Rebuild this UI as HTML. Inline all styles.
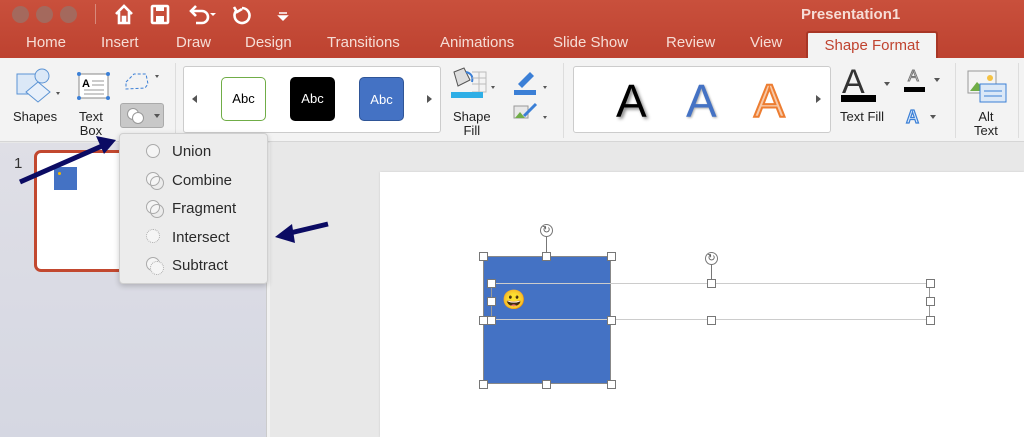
<!DOCTYPE html>
<html><head><style>
*{margin:0;padding:0;box-sizing:border-box}
body{width:1024px;height:437px;overflow:hidden;position:relative;font-family:"Liberation Sans",sans-serif;background:#e8e8e8}
.abs{position:absolute}
.title{left:0;top:0;width:1024px;height:58px;background:linear-gradient(#c9503c,#bd4230)}
.tab{position:absolute;top:34px;color:#f6ddd6;font-size:15px}
.rib{left:0;top:58px;width:1024px;height:84px;background:#f3f3f3;border-bottom:1px solid #d6d6d6}
.lbl{position:absolute;font-size:13px;color:#222;text-align:center;line-height:14px}
.dot{position:absolute;width:17px;height:17px;border-radius:50%;background:#a4695d;top:6px}
.mi{position:absolute;left:52px;font-size:15px;color:#2a2a2a}
.mic{position:absolute;left:26px;width:14px;height:14px;border:1px solid #aaa;border-radius:50%;background:#f5f5f5}
.h{position:absolute;width:9px;height:9px;background:#fff;border:1px solid #777;margin:-4px 0 0 -4px}
.rot{position:absolute;width:13px;height:13px;border:1px solid #777;border-radius:50%;background:#fff;margin:-6px 0 0 -6px;font-size:10px;line-height:11px;text-align:center;color:#555}
</style></head><body>
<div class="abs title">
 <div class="dot" style="left:12px"></div><div class="dot" style="left:36px"></div><div class="dot" style="left:60px"></div>
 <div class="abs" style="left:95px;top:4px;width:1px;height:20px;background:#d78a7c"></div>
 <svg class="abs" style="left:112px;top:2px" width="190" height="26" viewBox="0 0 190 26" fill="#fff" stroke="#fff">
  <path d="M4 12 L12 4 L20 12 M7 10 V21 H11 V15 H13 V21 H17 V10" fill="none" stroke-width="2.6"/>
  <rect x="40" y="4" width="16" height="17" fill="none" stroke-width="2.6" rx="1"/><rect x="44" y="5" width="8" height="4" stroke="none"/><rect x="44" y="14" width="8" height="6" stroke="none"/>
  <path d="M80 9 H90 A6 6 0 0 1 90 21 H84 M84 4 L79 9 L84 14" fill="none" stroke-width="2.6"/>
  <path d="M98 11 l3 3 l3 -3z" stroke="none"/>
  <path d="M130 6 A7.5 7.5 0 1 1 124 9 M122 5 L125 10 L130 7" fill="none" stroke-width="2.6"/>
  <path d="M167 11 h8 M167 14 l4 4 l4 -4z" stroke-width="1.5"/>
 </svg>
 <div class="abs" style="left:801px;top:6px;color:#f6ddd6;font-size:15px;font-weight:bold">Presentation1</div>
 <div class="tab" style="left:26px">Home</div><div class="tab" style="left:101px">Insert</div><div class="tab" style="left:176px">Draw</div><div class="tab" style="left:245px">Design</div><div class="tab" style="left:327px">Transitions</div><div class="tab" style="left:440px">Animations</div><div class="tab" style="left:553px">Slide Show</div><div class="tab" style="left:666px">Review</div><div class="tab" style="left:750px">View</div>
 <div class="abs" style="left:806px;top:31px;width:132px;height:27px;background:#f3f3f3;border:2px solid #a83626;border-bottom:none;border-radius:3px 3px 0 0;color:#c0432f;font-size:15px;text-align:center;padding-top:4px">Shape Format</div>
</div>
<div class="abs rib">
 <svg class="abs" style="left:14px;top:10px" width="160" height="40">
  <rect x="3" y="6" width="22" height="20" fill="#dbe8f7" stroke="#5b93d4"/><circle cx="28" cy="8" r="7" fill="#dbe8f7" stroke="#5b93d4"/><path d="M24 14 L36 24 L24 34 L12 24z" fill="#e8f0fa" stroke="#5b93d4"/>
  <path d="M42 24 l4 0 l-2 3z" fill="#555"/>
  <rect x="65" y="6" width="29" height="24" fill="#fff" stroke="#888"/><text x="68" y="19" font-size="11" font-weight="bold" font-family="Liberation Sans">A</text><path d="M78 13h12M78 17h12M70 22h20M70 26h20" stroke="#999"/>
  <circle cx="65" cy="6" r="2" fill="#3b7fd6"/><circle cx="94" cy="6" r="2" fill="#3b7fd6"/><circle cx="65" cy="30" r="2" fill="#3b7fd6"/><circle cx="94" cy="30" r="2" fill="#3b7fd6"/>
  <path d="M112 14 L120 6 L132 6 L134 16 L131 20 L112 21z" fill="none" stroke="#3b7fd6" stroke-dasharray="3 2"/>
  <path d="M141 7 l4 0 l-2 3z" fill="#555"/>
 </svg>
 <div class="abs" style="left:120px;top:45px;width:44px;height:25px;background:#c8c8c8;border:1px solid #aaa;border-radius:3px">
  <div class="abs" style="left:6px;top:4px;width:12px;height:12px;border:1px solid #999;border-radius:50%;background:#fff"></div><div class="abs" style="left:11px;top:8px;width:12px;height:12px;border:1px solid #999;border-radius:50%;background:#fff"></div>
  <div class="abs" style="left:33px;top:10px;border:3px solid transparent;border-top:4px solid #555"></div>
 </div>
 <div class="lbl" style="left:13px;top:52px">Shapes</div><div class="lbl" style="left:79px;top:52px">Text<br>Box</div>
 <div class="abs" style="left:175px;top:5px;width:1px;height:75px;background:#ddd"></div>
 <div class="abs" style="left:183px;top:8px;width:258px;height:67px;background:#fff;border:1px solid #ccc;border-radius:3px">
  <div class="abs" style="left:8px;top:28px;border:4px solid transparent;border-right:5px solid #555;border-left:0"></div>
  <div class="abs" style="left:37px;top:10px;width:45px;height:44px;border:1.5px solid #70ad47;border-radius:5px;font-size:13px;text-align:center;line-height:42px">Abc</div>
  <div class="abs" style="left:106px;top:10px;width:45px;height:44px;background:#000;border-radius:5px;color:#fff;font-size:13px;text-align:center;line-height:44px">Abc</div>
  <div class="abs" style="left:175px;top:10px;width:45px;height:44px;background:#4472c4;border-radius:5px;color:#fff;font-size:13px;text-align:center;line-height:44px;border:1px solid #2f5597">Abc</div>
  <div class="abs" style="left:243px;top:28px;border:4px solid transparent;border-left:5px solid #555;border-right:0"></div>
 </div>
 <svg class="abs" style="left:448px;top:8px" width="110" height="60">
  <path d="M6 6 L16 2 L22 14 L10 20z" fill="#ddd" stroke="#555"/><path d="M18 6 q8 2 6 10" fill="none" stroke="#3b7fd6" stroke-width="2"/><path d="M24 6h14v20h-14M24 12h14M24 18h14M31 6v20" stroke="#bbb" fill="none"/>
  <rect x="3" y="26" width="32" height="6" fill="#2eaee6"/><path d="M43 20 l4 0 l-2 3z" fill="#555"/>
  <path d="M70 18 L82 6 L86 10 L74 22z" fill="#3b7fd6"/><rect x="66" y="24" width="22" height="5" fill="#3b7fd6"/><path d="M95 20 l4 0 l-2 3z" fill="#555"/>
  <rect x="66" y="40" width="14" height="12" fill="#e8e8e8" stroke="#999"/><path d="M67 52 l5 -6 l5 6z" fill="#70ad47"/><path d="M76 50 L88 38" stroke="#3b7fd6" stroke-width="3"/><path d="M95 50 l4 0 l-2 3z" fill="#555"/>
 </svg>
 <div class="lbl" style="left:453px;top:52px">Shape<br>Fill</div>
 <div class="abs" style="left:563px;top:5px;width:1px;height:75px;background:#ddd"></div>
 <div class="abs" style="left:573px;top:8px;width:258px;height:67px;background:#fff;border:1px solid #ccc;border-radius:3px">
  <div class="abs" style="left:42px;top:10px;font-size:46px;color:#000;text-shadow:2px 2px 3px #888;line-height:48px">A</div>
  <div class="abs" style="left:112px;top:10px;font-size:46px;color:#4472c4;text-shadow:1px 1px 2px #aaa;line-height:48px">A</div>
  <div class="abs" style="left:180px;top:10px;font-size:46px;color:#f7c9a8;-webkit-text-stroke:2px #ed7d31;line-height:48px">A</div>
  <div class="abs" style="left:242px;top:28px;border:4px solid transparent;border-left:5px solid #555;border-right:0"></div>
 </div>
 <div class="abs" style="left:842px;top:6px;font-size:34px;color:#333;line-height:36px">A</div>
 <div class="abs" style="left:841px;top:37px;width:35px;height:7px;background:#000"></div>
 <div class="abs" style="left:884px;top:24px;border:3px solid transparent;border-top:4px solid #555"></div>
 <div class="lbl" style="left:840px;top:52px">Text Fill</div>
 <div class="abs" style="left:908px;top:10px;font-size:16px;color:#fff;-webkit-text-stroke:1px #777;line-height:18px">A</div>
 <div class="abs" style="left:904px;top:29px;width:21px;height:5px;background:#000"></div>
 <div class="abs" style="left:934px;top:20px;border:3px solid transparent;border-top:4px solid #555"></div>
 <div class="abs" style="left:906px;top:49px;font-size:18px;color:#dbeafb;-webkit-text-stroke:1.2px #3b7fd6;font-weight:bold;line-height:20px">A</div>
 <div class="abs" style="left:930px;top:57px;border:3px solid transparent;border-top:4px solid #555"></div>
 <div class="abs" style="left:955px;top:5px;width:1px;height:75px;background:#ddd"></div>
 <svg class="abs" style="left:966px;top:11px" width="44" height="36"><rect x="2" y="2" width="28" height="22" fill="#f4f4f4" stroke="#999"/><path d="M4 22 l7 -9 l9 9z" fill="#70ad47"/><circle cx="24" cy="9" r="3" fill="#f5c242"/><rect x="14" y="15" width="26" height="18" fill="#dbe8f7" stroke="#3b7fd6"/><path d="M18 22h18M18 27h18" stroke="#3b7fd6"/></svg>
 <div class="lbl" style="left:974px;top:52px">Alt<br>Text</div>
 <div class="abs" style="left:1018px;top:5px;width:1px;height:75px;background:#ddd"></div>
</div>
<div class="abs" style="left:0;top:143px;width:266px;height:294px;background:linear-gradient(#dfdfe6,#d5d7e2)"></div>
<div class="abs" style="left:266px;top:143px;width:4px;height:294px;background:#f2f2f2;border-left:1px solid #ccc"></div>
<div class="abs" style="left:14px;top:155px;font-size:15px;color:#333">1</div>
<div class="abs" style="left:34px;top:150px;width:100px;height:122px;background:#fff;border:3px solid #c2482f;border-radius:7px"></div>
<div class="abs" style="left:54px;top:167px;width:23px;height:23px;background:#4472c4"></div>
<div class="abs" style="left:58px;top:172px;width:3px;height:3px;background:#f5b800;border-radius:50%"></div>
<div class="abs" style="left:380px;top:172px;width:644px;height:265px;background:#fff;box-shadow:0 0 2px #ccc"></div>
<div class="abs" style="left:483px;top:256px;width:128px;height:128px;background:#4472c4;border:1px solid #888"></div>
<div class="abs" style="left:491px;top:283px;width:439px;height:37px;border:1px solid #999;border-top-color:#ccc;border-bottom-color:#ccc"></div>
<div class="abs" style="left:546px;top:230px;width:1px;height:26px;background:#777"></div>
<div class="abs" style="left:711px;top:258px;width:1px;height:25px;background:#777"></div>
<div class="rot" style="left:546px;top:230px">↻</div><div class="rot" style="left:711px;top:258px">↻</div>
<div class="abs" style="left:502px;top:290px;font-size:19px;line-height:22px">😀</div>
<div class="h" style="left:483px;top:256px"></div><div class="h" style="left:546px;top:256px"></div><div class="h" style="left:611px;top:256px"></div>
<div class="h" style="left:483px;top:320px"></div><div class="h" style="left:611px;top:320px"></div>
<div class="h" style="left:483px;top:384px"></div><div class="h" style="left:546px;top:384px"></div><div class="h" style="left:611px;top:384px"></div>
<div class="h" style="left:491px;top:283px"></div><div class="h" style="left:491px;top:301px"></div><div class="h" style="left:491px;top:320px"></div>
<div class="h" style="left:711px;top:283px"></div><div class="h" style="left:711px;top:320px"></div>
<div class="h" style="left:930px;top:283px"></div><div class="h" style="left:930px;top:301px"></div><div class="h" style="left:930px;top:320px"></div>
<div class="abs" style="left:119px;top:133px;width:149px;height:151px;background:#ececec;border:1px solid #d0d0d0;border-radius:4px;box-shadow:0 2px 6px rgba(0,0,0,.2)">
 <div class="mic" style="top:10px"></div><div class="mi" style="top:9px">Union</div>
 <div class="mic" style="top:38px"></div><div class="mic" style="top:42px;left:30px;background:none"></div><div class="mi" style="top:38px">Combine</div>
 <div class="mic" style="top:66px"></div><div class="mic" style="top:70px;left:30px;background:none"></div><div class="mi" style="top:66px">Fragment</div>
 <div class="mic" style="top:95px;border-style:dotted"></div><div class="mi" style="top:95px">Intersect</div>
 <div class="mic" style="top:123px"></div><div class="mic" style="top:127px;left:30px;border-style:dotted"></div><div class="mi" style="top:123px">Subtract</div>
</div>
<svg class="abs" style="left:0;top:0" width="1024" height="437">
 <path d="M20 182 L102 146" stroke="#0b0b63" stroke-width="5"/><path d="M116 140 L96 136 L104 154z" fill="#0b0b63"/>
 <path d="M328 224 L290 233" stroke="#0b0b63" stroke-width="5"/><path d="M275 237 L292 224 L295 243z" fill="#0b0b63"/>
</svg>
</body></html>
